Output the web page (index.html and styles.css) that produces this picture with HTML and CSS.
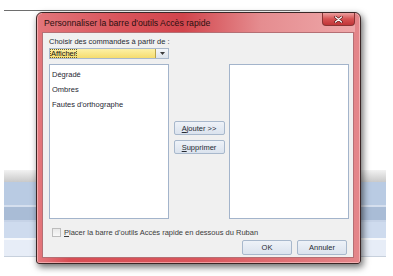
FILE: index.html
```html
<!DOCTYPE html>
<html lang="fr">
<head>
<meta charset="UTF-8">
<meta name="viewport" content="width=device-width, initial-scale=1.0">
<title>Personnaliser la barre d'outils Accès rapide</title>
<link rel="stylesheet" href="styles.css">
</head>
<body>

<div class="desktop">
    <div class="topline"></div>
    <div class="ribbon">
        <div class="band band-gray"></div>
        <div class="band band-a"></div>
        <div class="band band-line"></div>
        <div class="band band-b"></div>
        <div class="band band-line2"></div>
        <div class="band band-c"></div>
        <div class="band band-white"></div>
        <div class="band band-d"></div>
        <div class="band band-end"></div>
    </div>

    <div class="dialog">
        <div class="titlebar">
            <span class="title">Personnaliser la barre d'outils Accès rapide</span>
            <div class="close">
                <svg width="9" height="7" viewBox="0 0 9 7">
                    <path d="M1.5 1 L7.5 6 M7.5 1 L1.5 6" stroke="#5a1414" stroke-width="2.6" stroke-linecap="round"/>
                    <path d="M1.5 1 L7.5 6 M7.5 1 L1.5 6" stroke="#ffffff" stroke-width="1.3" stroke-linecap="round"/>
                </svg>
            </div>
        </div>
        <div class="client">
            <div class="label">Choisir des commandes à partir de :</div>
            <div class="combo">
                <div class="combo-value"><span class="sel">Afficher</span></div>
                <div class="combo-arrow">
                    <svg width="5" height="3" viewBox="0 0 5 3"><path d="M0 0 H5 L2.5 3 Z" fill="#3a3a3a"/></svg>
                </div>
            </div>

            <div class="lists">
                <div class="listbox">
                    <div class="item">Dégradé</div>
                    <div class="item">Ombres</div>
                    <div class="item">Fautes d'orthographe</div>
                </div>
                <div class="middle">
                    <button class="btn" type="button"><u>A</u>jouter &gt;&gt;</button>
                    <button class="btn" type="button"><u>S</u>upprimer</button>
                </div>
                <div class="listbox"></div>
            </div>

            <div class="check-row">
                <span class="checkbox"></span>
                <span class="check-label"><u>P</u>lacer la barre d'outils Accès rapide en dessous du Ruban</span>
            </div>

            <div class="actions">
                <button class="btn btn-wide" type="button">OK</button>
                <button class="btn btn-wide" type="button">Annuler</button>
            </div>
        </div>
    </div>
</div>

</body>
</html>
```

FILE: styles.css
```css
body {
    margin: 0;
    padding: 0;
    background-color: #fff;
    font-family: "Liberation Sans", Arial, sans-serif;
}

.desktop {
    position: relative;
    width: 393px;
    height: 276px;
    padding-top: 10px;
    box-sizing: border-box;
    overflow: hidden;
}

.topline {
    width: 296px;
    height: 1px;
    margin-left: 4px;
    background-color: #6e6e6e;
}

.ribbon {
    width: 382px;
    margin: 159px 0 0 4px;
}

.band-gray { height: 12px; background: linear-gradient(#f2f2f2, #c9c9c9); }
.band-a { height: 23px; background-color: #b9cbe3; }
.band-line { height: 2px; background-color: #d5dfee; }
.band-b { height: 13px; background-color: #a9bcd6; }
.band-line2 { height: 2px; background-color: #c6d3e7; }
.band-c { height: 16px; background-color: #cedbee; }
.band-white { height: 2px; background-color: #f7f9fc; }
.band-d { height: 16px; background-color: #e7edf7; }
.band-end { height: 1px; background-color: #c7d0dc; }

/* dialog window */
.dialog {
    position: absolute;
    left: 36px;
    top: 12px;
    width: 325px;
    height: 252px;
    box-sizing: border-box;
    display: flex;
    flex-direction: column;
    padding: 0 6px 5px 5px;
    border: 1px solid #3a2626;
    border-radius: 6px 6px 3px 3px;
    background: linear-gradient(90deg, #e47a7f 0%, #d84d54 10%, #d9555b 50%, #e4868a 100%);
    box-shadow: 2px 3px 7px rgba(0, 0, 0, 0.6), inset 0 0 0 1px rgba(255, 205, 205, 0.6);
}

.titlebar {
    height: 19px;
    display: flex;
    align-items: center;
    margin: 0 -1px 0 0;
    background: linear-gradient(90deg, #e27479 0%, #d9545b 25%, #d2454c 45%, #e58d90 70%, #eea7a9 100%);
}

.title {
    font-size: 8.7px;
    color: #2a1010;
    padding-left: 2px;
    margin-top: 1px;
}

.close {
    margin-left: auto;
    align-self: flex-start;
    width: 33px;
    height: 13px;
    display: flex;
    align-items: center;
    justify-content: center;
    border: 1px solid #8a3434;
    border-top: none;
    border-radius: 0 0 4px 4px;
    box-sizing: border-box;
    background: linear-gradient(#eda0a0, #d65252 50%, #c03538);
}

.client {
    flex: 1;
    display: flex;
    flex-direction: column;
    padding: 3px 4px 0 6px;
    border: 1px solid #b56f74;
    background-color: #f0f0f0;
    font-size: 7.5px;
    color: #262b33;
}

.label {
    height: 9px;
    line-height: 9px;
    margin-top: 1px;
}

.combo {
    display: flex;
    width: 120px;
    height: 11px;
    margin-top: 2px;
    box-sizing: border-box;
    border: 1px solid #a9b8cb;
    background-color: #fff;
}

.combo-value {
    flex: 1;
    display: flex;
    align-items: center;
    padding-left: 1px;
    background: linear-gradient(#fdf1a6, #f5dc6e);
    border-right: 1px solid #b9a24a;
}

.sel {
    line-height: 7px;
    color: #111;
    outline: 1px dotted #6f5f20;
}

.combo-arrow {
    width: 12px;
    display: flex;
    align-items: center;
    justify-content: center;
    background: linear-gradient(#f4f6f9, #dde3ea);
}

.lists {
    display: flex;
    margin-top: 5px;
    height: 155px;
}

.listbox {
    width: 120px;
    box-sizing: border-box;
    border: 1px solid #a3b4cb;
    background-color: #fff;
    padding: 4px 0 0 2px;
}

.item {
    height: 15px;
    line-height: 11px;
    color: #1f2733;
}

.middle {
    width: 60px;
    display: flex;
    flex-direction: column;
    align-items: center;
    gap: 5px;
    padding-top: 57px;
    box-sizing: border-box;
}

.btn {
    width: 51px;
    height: 14px;
    padding: 0;
    border: 1px solid #a8b8cc;
    border-radius: 2px;
    background: linear-gradient(#eef2f8, #dbe3ee);
    font-family: "Liberation Sans", Arial, sans-serif;
    font-size: 7.5px;
    color: #262b33;
}

.check-row {
    display: flex;
    align-items: center;
    gap: 3px;
    margin: 9px 0 0 3px;
    height: 8px;
}

.checkbox {
    width: 7px;
    height: 7px;
    border: 1px solid #bcbcbc;
    background: linear-gradient(#e8e8e8, #f8f8f8);
}

.check-label {
    color: #3c3c3c;
}

.actions {
    display: flex;
    justify-content: flex-end;
    gap: 5px;
    margin: 4px 2px 0 0;
}

.btn-wide {
    width: 50px;
    height: 15px;
}
```
